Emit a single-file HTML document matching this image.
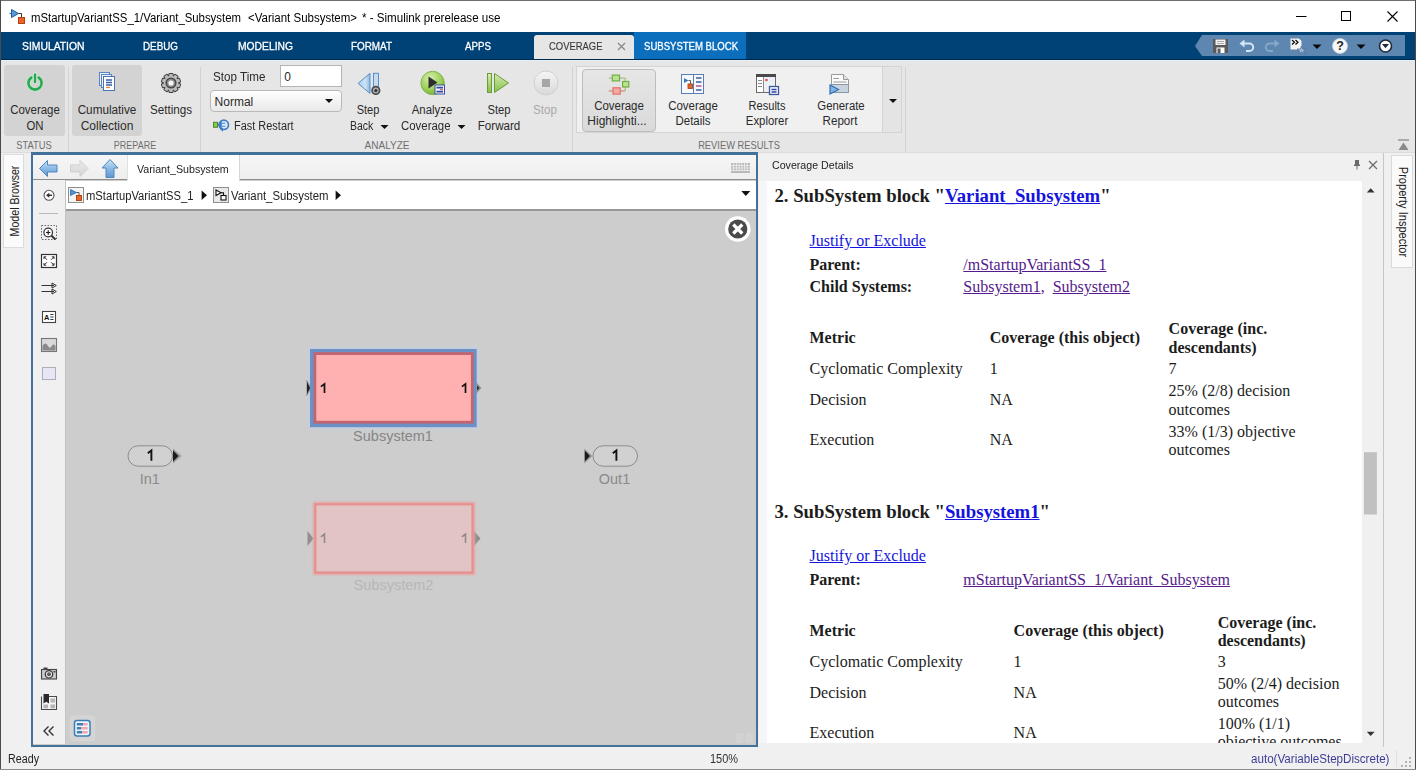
<!DOCTYPE html>
<html>
<head>
<meta charset="utf-8">
<title>Simulink</title>
<style>
*{box-sizing:border-box;margin:0;padding:0}
html,body{width:1416px;height:770px;overflow:hidden;background:#fff}
body{font-family:"Liberation Sans",sans-serif;font-size:12px;color:#222;position:relative}
.abs{position:absolute}
.t{position:absolute;white-space:nowrap;line-height:14px;transform-origin:0 50%;transform:scaleX(var(--k,1))}
.c{position:absolute;white-space:nowrap;line-height:14px;text-align:center;transform:translateX(-50%) scaleX(var(--k,1))}
#win{position:absolute;left:0;top:0;width:1416px;height:770px;background:#f0f0f0;overflow:hidden}
/* title */
#title{left:1px;top:1px;width:1414px;height:31px;background:#fff}
/* tabs */
#tabs{left:1px;top:32px;width:1414px;height:28px;background:#004275}
#tabs .tab{position:absolute;top:8px;color:#fff;font-size:11px;line-height:12px;white-space:nowrap;transform-origin:0 50%;transform:scaleX(var(--k,1));-webkit-text-stroke:.3px currentColor}
/* toolstrip */
#strip{left:1px;top:60px;width:1414px;height:93px;background:#e6e6e6;color:#2a2a2a}
.seclab{position:absolute;top:79px;font-size:11px;color:#6a6a6a;line-height:12px;transform:translateX(-50%);white-space:nowrap}
.vsep{position:absolute;top:7px;width:1px;height:85px;background:#d2d2d2}
.bl{position:absolute;white-space:nowrap;line-height:16px;font-size:12px;text-align:center;transform:translateX(-50%);color:#1e1e1e}
/* serif content */
#cov{font-family:"Liberation Serif",serif;font-size:16px;color:#1c1c1c}
#cov .s{position:absolute;white-space:nowrap;line-height:18px}
#cov .h{position:absolute;white-space:nowrap;font-weight:bold;font-size:18.72px;line-height:22px}
#cov a{text-decoration:underline}
#cov a.b{color:#1414dc}
#cov a.v{color:#551a8b}
#cov b{font-weight:bold}
</style>
</head>
<body>
<div id="win">

<!-- TITLE BAR -->
<div id="title" class="abs">
 <svg class="abs" style="left:7px;top:6px" width="20" height="20" viewBox="0 0 20 20">
  <path d="M1.5 6.5H4" stroke="#2b6aa8" stroke-width="1" fill="none"/>
  <path d="M3.5 2.5L10.5 6.5L3.5 10.5Z" fill="#5b9bd5" stroke="#1f5c99" stroke-width="1"/>
  <path d="M10.5 6.5H13.5V10" stroke="#333" stroke-width="1" fill="none"/>
  <rect x="10.5" y="10.5" width="6" height="6" fill="#e8632a" stroke="#b8410f" stroke-width="1"/>
 </svg>
 <div class="t" style="left:29.500px;top:9.500px;font-size:12px;color:#000;--k:.947">mStartupVariantSS_1/Variant_Subsystem</div>
 <div class="t" style="left:246.900px;top:9.500px;font-size:12px;color:#000;--k:.958">&lt;Variant Subsystem&gt;</div>
 <div class="t" style="left:360.700px;top:9.500px;font-size:12px;color:#000;--k:.966">* - Simulink prerelease use</div>
 <svg class="abs" style="left:1290px;top:4px" width="115" height="22" viewBox="0 0 115 22">
  <path d="M5 11.5H15.5" stroke="#000" stroke-width="1"/>
  <rect x="50.5" y="6.5" width="9" height="9" fill="none" stroke="#000" stroke-width="1"/>
  <path d="M96.5 6.5L106.5 16.5M106.5 6.5L96.5 16.5" stroke="#000" stroke-width="1.1"/>
 </svg>
</div>

<!-- TAB BAR -->
<div id="tabs" class="abs">
 <div class="tab" style="left:21px;--k:.941">SIMULATION</div>
 <div class="tab" style="left:142px;--k:.895">DEBUG</div>
 <div class="tab" style="left:237px;--k:.937">MODELING</div>
 <div class="tab" style="left:350px;--k:.899">FORMAT</div>
 <div class="tab" style="left:464px;--k:.886">APPS</div>
 <div class="abs" style="left:533px;top:3px;width:100px;height:25px;background:#e6e6e6;border-radius:3px 3px 0 0"></div>
 <div class="tab" style="left:548px;color:#3a3a3a;--k:.858;-webkit-text-stroke:.15px currentColor">COVERAGE</div>
 <svg class="abs" style="left:616px;top:10px" width="9" height="9" viewBox="0 0 9 9"><path d="M1 1L8 8M8 1L1 8" stroke="#8a8a8a" stroke-width="1.3"/></svg>
 <div class="abs" style="left:633px;top:0;width:112px;height:28px;background:#0c6fbd"></div>
 <div class="tab" style="left:643px;--k:.869">SUBSYSTEM BLOCK</div>
 <!-- quick access -->
 <svg class="abs" style="left:1190px;top:2px" width="220" height="24" viewBox="0 0 220 24">
  <path d="M4 12L11 1H214V22H11Z" fill="#5d86b0"/>
  <!-- save -->
  <rect x="22" y="5" width="15" height="14" fill="#5a5a5a"/>
  <rect x="24.5" y="5.5" width="10" height="5.5" fill="#f2f2f2"/>
  <path d="M26 7.5H33M26 9.5H33" stroke="#9a9a9a" stroke-width=".8"/>
  <rect x="25.5" y="13.5" width="8" height="5.5" fill="#fff"/>
  <rect x="26.5" y="14.5" width="3" height="4.5" fill="#5a5a5a"/>
  <!-- undo -->
  <path d="M52 9.5H58.5A3.7 3.7 0 0 1 58.5 17H55" fill="none" stroke="#d5e6f7" stroke-width="2"/>
  <path d="M48.5 9.5L53.5 5.5V13.5Z" fill="#d5e6f7"/>
  <!-- redo -->
  <path d="M85 9.5H78.5A3.7 3.7 0 0 0 78.5 17H82" fill="none" stroke="#86a6c8" stroke-width="2"/>
  <path d="M88.5 9.5L83.5 5.5V13.5Z" fill="#86a6c8"/>
  <!-- script -->
  <path d="M99.5 4.5H108L110.5 7V15.5H99.5Z" fill="#f4f4f4"/>
  <path d="M101 6L103.5 8.3L101 10.6M104.5 6L107 8.3L104.5 10.6" fill="none" stroke="#111" stroke-width="1.3"/>
  <path d="M110.5 12L111.8 15H115L112.5 17L113.5 20L110.5 18.2L107.5 20L108.5 17L106 15H109.2Z" fill="#9ab6d6" stroke="#4a6d95" stroke-width=".7"/>
  <path d="M121.5 10.5H130.5L126 15Z" fill="#0a0a0a"/>
  <!-- help -->
  <circle cx="149" cy="12" r="7.5" fill="#f6f6f6" stroke="#c8d4e2" stroke-width=".8"/>
  <text x="149" y="16.4" font-family="Liberation Sans" font-weight="bold" font-size="12.5" text-anchor="middle" fill="#222">?</text>
  <path d="M165.500 10.5H174.500L170 15Z" fill="#0a0a0a"/>
  <!-- circle arrow -->
  <circle cx="194.500" cy="12" r="6" fill="#fff" stroke="#1c2a3a" stroke-width="1.6"/>
  <path d="M191 10H198L194.500 14.200Z" fill="#1c2a3a"/>
 </svg>
</div>

<!-- TOOLSTRIP -->
<div id="strip" class="abs">
 <div class="abs" style="left:0;top:-1px;width:1414px;height:1px;background:#00294a"></div><div class="abs" style="left:0;top:0;width:1414px;height:1.3px;background:#e4f1fb"></div>
 <!-- toggled buttons -->
 <div class="abs" style="left:3px;top:5px;width:61px;height:71px;background:#d3d3d3;border-radius:3px"></div>
 <div class="abs" style="left:71px;top:5px;width:70px;height:71px;background:#d3d3d3;border-radius:3px"></div>
 <!-- separators -->
 <div class="vsep" style="left:67px"></div>
 <div class="vsep" style="left:199px"></div>
 <div class="vsep" style="left:571px"></div>
 <div class="vsep" style="left:904px"></div>
 <!-- power icon -->
 <svg class="abs" style="left:22px;top:10.700px" width="24" height="24" viewBox="0 0 24 24">
  <path d="M8.3 6.6A6.6 6.6 0 1 0 15.700 6.600" fill="none" stroke="#b9ecc6" stroke-width="4.2" stroke-linecap="round"/>
  <path d="M12 3.300V11" stroke="#d8f3df" stroke-width="4" stroke-linecap="round"/>
  <path d="M8.3 6.600A6.600 6.600 0 1 0 15.700 6.600" fill="none" stroke="#2da552" stroke-width="2.600" stroke-linecap="round"/>
  <path d="M12 3.500V11" stroke="#2da552" stroke-width="2.500" stroke-linecap="round"/>
 </svg>
 <!-- cumulative icon -->
 <svg class="abs" style="left:96px;top:11px" width="22" height="22" viewBox="0 0 22 22">
  <rect x="2.500" y="1.500" width="10" height="13" fill="#eef3fa" stroke="#5b84c4"/>
  <rect x="4.500" y="3.500" width="10" height="13" fill="#eef3fa" stroke="#5b84c4"/>
  <rect x="6.500" y="5.500" width="11" height="14" fill="#fff" stroke="#4a74b8"/>
  <path d="M9 9H15M9 11.500H15M9 14H15" stroke="#3a5fa5" stroke-width="1.400"/>
  <path d="M9 16.500H13" stroke="#d98a3a" stroke-width="1.300"/>
 </svg>
 <!-- gear -->
 <svg class="abs" style="left:158px;top:11px" width="24" height="24" viewBox="-12 -12 24 24">
  <g transform="scale(.94)"><g fill="#3e3e3e" stroke="#3e3e3e" stroke-width="2" stroke-linejoin="round">
   <path d="M-1.600 -9.700H1.600L2.100 -6.500H-2.100Z" transform="rotate(0.0)"/>
   <path d="M-1.600 -9.700H1.600L2.100 -6.500H-2.100Z" transform="rotate(36.0)"/>
   <path d="M-1.600 -9.700H1.600L2.100 -6.500H-2.100Z" transform="rotate(72.0)"/>
   <path d="M-1.600 -9.700H1.600L2.100 -6.500H-2.100Z" transform="rotate(108.0)"/>
   <path d="M-1.600 -9.700H1.600L2.100 -6.500H-2.100Z" transform="rotate(144.0)"/>
   <path d="M-1.600 -9.700H1.600L2.100 -6.500H-2.100Z" transform="rotate(180.0)"/>
   <path d="M-1.600 -9.700H1.600L2.100 -6.500H-2.100Z" transform="rotate(216.0)"/>
   <path d="M-1.600 -9.700H1.600L2.100 -6.500H-2.100Z" transform="rotate(252.0)"/>
   <path d="M-1.600 -9.700H1.600L2.100 -6.500H-2.100Z" transform="rotate(288.0)"/>
   <path d="M-1.600 -9.700H1.600L2.100 -6.500H-2.100Z" transform="rotate(324.0)"/>
   <circle r="7.500"/>
  </g>
  <g fill="#bcbcbc">
   <path d="M-1.600 -9.700H1.600L2.100 -6.500H-2.100Z" transform="rotate(0.0)"/>
   <path d="M-1.600 -9.700H1.600L2.100 -6.500H-2.100Z" transform="rotate(36.0)"/>
   <path d="M-1.600 -9.700H1.600L2.100 -6.500H-2.100Z" transform="rotate(72.0)"/>
   <path d="M-1.600 -9.700H1.600L2.100 -6.500H-2.100Z" transform="rotate(108.0)"/>
   <path d="M-1.600 -9.700H1.600L2.100 -6.500H-2.100Z" transform="rotate(144.0)"/>
   <path d="M-1.600 -9.700H1.600L2.100 -6.500H-2.100Z" transform="rotate(180.0)"/>
   <path d="M-1.600 -9.700H1.600L2.100 -6.500H-2.100Z" transform="rotate(216.0)"/>
   <path d="M-1.600 -9.700H1.600L2.100 -6.500H-2.100Z" transform="rotate(252.0)"/>
   <path d="M-1.600 -9.700H1.600L2.100 -6.500H-2.100Z" transform="rotate(288.0)"/>
   <path d="M-1.600 -9.700H1.600L2.100 -6.500H-2.100Z" transform="rotate(324.0)"/>
   <circle r="7.500"/>
  </g>
  <circle r="5.900" fill="#474747"/>
  <circle r="4.300" fill="#8e8e8e"/>
  <circle r="2.700" fill="#f6f6f6"/></g>
 </svg>
 <!-- stop time input -->
 <div class="abs" style="left:279px;top:5px;width:62px;height:22px;background:#fff;border:1px solid #b4b4b4"></div>
 <!-- dropdown -->
 <div class="abs" style="left:209px;top:30px;width:132px;height:22px;background:linear-gradient(#ffffff,#f1f1f1 60%,#e9e9e9);border:1px solid #b9b9b9;border-radius:4px"></div>
 <svg class="abs" style="left:323px;top:38px" width="10" height="6" viewBox="0 0 10 6"><path d="M1 1H9L5 5Z" fill="#111"/></svg>
 <!-- fast restart icon -->
 <svg class="abs" style="left:211px;top:57px" width="20" height="16" viewBox="0 0 20 16">
  <rect x="1.500" y="5.300" width="4" height="5" fill="#8fc653" stroke="#4f8a2b"/>
  <circle cx="11.800" cy="7.800" r="4.700" fill="#dfeaf8" stroke="#3f7fc4" stroke-width="1.700"/>
  <path d="M5.300 7.800L9.800 4V11.600Z" fill="#3f7fc4"/>
  <path d="M10 6.300H13.300M10 9.300H13.300" stroke="#4a86c8" stroke-width="1.100"/>
  <path d="M8 12.300L11 14.800V10.800Z" fill="#3f7fc4"/>
 </svg>
 <!-- step back -->
 <svg class="abs" style="left:355px;top:11px" width="28" height="26" viewBox="0 0 28 26">
  <defs><linearGradient id="gb" x1="0" y1="0" x2="1" y2="0"><stop offset="0" stop-color="#a9cdec"/><stop offset=".6" stop-color="#cfe3f5"/><stop offset="1" stop-color="#8bb8e0"/></linearGradient></defs>
  <path d="M2 12.400L14 2.300V22.400Z" fill="url(#gb)" stroke="#5a90c6" stroke-width="1" stroke-linejoin="round"/>
  <rect x="17.500" y="2.300" width="5" height="16" fill="#c4dcf2" stroke="#5a90c6"/>
  <circle cx="19.800" cy="19.400" r="4.600" fill="#4c4c4c"/>
  <circle cx="19.800" cy="19.400" r="2.900" fill="#b0b0b0"/>
  <circle cx="19.800" cy="19.400" r="1.500" fill="#2a2a2a"/>
 </svg>
 <svg class="abs" style="left:379px;top:64px" width="9" height="6" viewBox="0 0 9 6"><path d="M.5 1H8.500L4.500 5Z" fill="#111"/></svg>
 <!-- analyze coverage -->
 <svg class="abs" style="left:417.300px;top:9px" width="30" height="28" viewBox="0 0 30 28">
  <defs><radialGradient id="gg" cx=".4" cy=".3" r=".8"><stop offset="0" stop-color="#d7efb0"/><stop offset=".6" stop-color="#9bcf55"/><stop offset="1" stop-color="#6aa42c"/></radialGradient></defs>
  <circle cx="14.600" cy="14" r="11.700" fill="url(#gg)" stroke="#86b553" stroke-width="1"/>
  <path d="M10.500 7.500L19.500 13.500L10.500 19.500Z" fill="#2e2e2e"/>
  <rect x="17" y="16" width="9.500" height="9" fill="#f4f6fb" stroke="#3c4f9a"/>
  <path d="M18.500 18.600H25M18.500 22.600H25" stroke="#2f49a8" stroke-width="1.800"/>
  <path d="M22 20.600H25" stroke="#d9534f" stroke-width="1"/>
 </svg>
 <svg class="abs" style="left:456px;top:64px" width="9" height="6" viewBox="0 0 9 6"><path d="M.5 1H8.500L4.500 5Z" fill="#111"/></svg>
 <!-- step forward -->
 <svg class="abs" style="left:484px;top:11px" width="28" height="26" viewBox="0 0 28 26">
  <defs><linearGradient id="gf" x1="0" y1="0" x2="0" y2="1"><stop offset="0" stop-color="#d4edb0"/><stop offset="1" stop-color="#86bf48"/></linearGradient></defs>
  <rect x="2.500" y="2.500" width="4" height="19" fill="url(#gf)" stroke="#6a9c3a"/>
  <path d="M9.500 2.500L23.500 12L9.500 21.500Z" fill="url(#gf)" stroke="#6a9c3a"/>
 </svg>
 <!-- stop -->
 <svg class="abs" style="left:531px;top:9px" width="28" height="28" viewBox="0 0 28 28">
  <defs><linearGradient id="gs" x1="0" y1="0" x2="0" y2="1"><stop offset="0" stop-color="#f6f6f6"/><stop offset="1" stop-color="#d8d8d8"/></linearGradient></defs>
  <circle cx="14" cy="14" r="12" fill="url(#gs)" stroke="#d0d0d0"/>
  <rect x="10" y="10" width="8" height="8" fill="#a6a6a6"/>
 </svg>
 <!-- gallery -->
 <div class="abs" style="left:575px;top:5.800px;width:326px;height:67.700px;background:#f0f0f0;border:1px solid #d4d4d4"></div>
 <div class="abs" style="left:881px;top:6.800px;width:19px;height:65.700px;background:#e4e4e4;border-left:1px solid #d4d4d4"></div>
 <svg class="abs" style="left:886.500px;top:38px" width="10" height="6" viewBox="0 0 10 6"><path d="M1 1H9L5 5Z" fill="#111"/></svg>
 <div class="abs" style="left:581px;top:8.500px;width:74px;height:63px;background:linear-gradient(#e6e6e6,#dadada);border:1px solid #bdbdbd;border-radius:4px"></div>
 <!-- highlight icon -->
 <svg class="abs" style="left:604px;top:13px" width="28" height="24" viewBox="0 0 28 24">
  <path d="M3.800 5.100H7.500M14.500 5.100H20.200V8.500M20.200 14V18H15M3.800 18H8" fill="none" stroke="#86b866" stroke-width=".9"/>
  <path d="M3.800 18H8M15 18H19.500" stroke="#e59088" stroke-width=".9"/>
  <rect x="7.300" y="2.100" width="7.200" height="5.800" fill="#b9e392" stroke="#72ad42" stroke-width="1.200"/>
  <rect x="17.600" y="8.500" width="6.200" height="5.500" fill="#b9e392" stroke="#72ad42" stroke-width="1.200"/>
  <rect x="8" y="14.800" width="7.200" height="6.300" fill="#f5aaa4" stroke="#e2716a" stroke-width="1.200"/>
 </svg>
 <!-- coverage details icon -->
 <svg class="abs" style="left:679px;top:12px" width="26" height="24" viewBox="0 0 26 24">
  <rect x="1.500" y="2.500" width="22" height="19" fill="#f6f8fc" stroke="#5a7eb5"/>
  <path d="M13.500 2.500V21.500" stroke="#5a7eb5" stroke-width="1"/>
  <path d="M4 6L8.500 8.500L4 11Z" fill="#3a78c2"/>
  <path d="M8.500 8.500H10.500V12" stroke="#333" stroke-width=".8" fill="none"/>
  <rect x="8" y="12" width="4.500" height="4.500" fill="#e8632a" stroke="#9c3a0f" stroke-width=".8"/>
  <path d="M16 6H21.500M16 10H21.500M16 18H21.500" stroke="#3a5fa5" stroke-width="1.600"/>
  <path d="M16 14H21.500" stroke="#c55a8a" stroke-width="1.600"/>
 </svg>
 <!-- results explorer icon -->
 <svg class="abs" style="left:753px;top:12px" width="28" height="26" viewBox="0 0 28 26">
  <rect x="2.500" y="2.500" width="19" height="18" fill="#eaf0f5" stroke="#6a6a6a"/>
  <rect x="2" y="2" width="20" height="3" fill="#4a4a4a"/>
  <rect x="3" y="5" width="6" height="15" fill="#fff"/>
  <path d="M9.500 5V20.500" stroke="#8a8a8a" stroke-width="1"/>
  <path d="M4 8.500H8M4 11.500H8M4 14.500H8" stroke="#8a8a8a" stroke-width="1"/>
  <circle cx="12.500" cy="8" r="1.300" fill="#e0504a"/>
  <rect x="15.500" y="14.500" width="9" height="8" fill="#f4f6fb" stroke="#3c5a9a" stroke-width="1.300"/>
  <path d="M17.500 17.500H22.500M17.500 20H22.500" stroke="#2f49a8" stroke-width="1.300"/>
 </svg>
 <!-- generate report icon -->
 <svg class="abs" style="left:826px;top:12px" width="26" height="26" viewBox="0 0 26 26">
  <path d="M4.500 2.500H16.500L21.500 7.500V20.500H4.500Z" fill="#fafafa" stroke="#9a9a9a"/>
  <path d="M16.500 2.500V7.500H21.500" fill="#e4e4e4" stroke="#9a9a9a"/>
  <path d="M6.500 6.500H12M6.500 10H19.500" stroke="#9a9a9a" stroke-width="1"/>
  <rect x="4.500" y="12.500" width="17" height="8" fill="#c9d3de" stroke="#8a97a6"/>
  <path d="M3 13L11.500 17.500L3 22Z" fill="#7fb4e6" stroke="#2f6fb3" stroke-width="1.200"/>
 </svg>
 <!-- collapse -->
 <svg class="abs" style="left:1396px;top:79px" width="13" height="12" viewBox="0 0 13 12"><path d="M1 1H12" stroke="#8a8a8a" stroke-width="1.300"/><path d="M6.500 3.500L11.500 11H1.500Z" fill="#8a8a8a"/></svg>
 <div class="c" style="left:33.5px;top:42.5px;font-size:12px;--k:0.955;">Coverage</div>
<div class="c" style="left:33.5px;top:59.3px;font-size:12px;--k:0.944;">ON</div>
<div class="c" style="left:105.8px;top:42.5px;font-size:12px;--k:0.978;">Cumulative</div>
<div class="c" style="left:106px;top:59.3px;font-size:12px;">Collection</div>
<div class="c" style="left:169.5px;top:42.5px;font-size:12px;--k:0.971;">Settings</div>
<div class="t" style="left:211.6px;top:10px;font-size:12px;--k:0.970;">Stop Time</div>
<div class="t" style="left:283.3px;top:10px;font-size:12px;">0</div>
<div class="t" style="left:213.6px;top:35px;font-size:12px;">Normal</div>
<div class="t" style="left:233.3px;top:59.3px;font-size:12px;--k:0.913;">Fast Restart</div>
<div class="c" style="left:367.3px;top:42.5px;font-size:12px;--k:0.919;">Step</div>
<div class="t" style="left:348.5px;top:59.3px;font-size:12px;--k:0.873;">Back</div>
<div class="c" style="left:430.7px;top:42.5px;font-size:12px;--k:0.948;">Analyze</div>
<div class="t" style="left:400px;top:59.3px;font-size:12px;--k:0.951;">Coverage</div>
<div class="c" style="left:497.5px;top:42.5px;font-size:12px;--k:0.932;">Step</div>
<div class="c" style="left:497.7px;top:59.3px;font-size:12px;--k:0.966;">Forward</div>
<div class="c" style="left:544px;top:42.5px;font-size:12px;--k:0.964;color:#a9a9a9;">Stop</div>
<div class="c" style="left:617.5px;top:38.8px;font-size:12px;--k:0.955;">Coverage</div>
<div class="c" style="left:616px;top:54px;font-size:12px;">Highlighti...</div>
<div class="c" style="left:691.5px;top:38.8px;font-size:12px;--k:0.955;">Coverage</div>
<div class="c" style="left:691.5px;top:54px;font-size:12px;--k:0.954;">Details</div>
<div class="c" style="left:765.5px;top:38.8px;font-size:12px;--k:0.922;">Results</div>
<div class="c" style="left:765.8px;top:54px;font-size:12px;--k:0.949;">Explorer</div>
<div class="c" style="left:839.5px;top:38.8px;font-size:12px;--k:0.947;">Generate</div>
<div class="c" style="left:839.4px;top:54px;font-size:12px;--k:0.966;">Report</div>
<div class="c" style="left:33.4px;top:78.2px;font-size:11px;--k:0.852;color:#6e6e6e;">STATUS</div>
<div class="c" style="left:133.5px;top:78.2px;font-size:11px;--k:0.817;color:#6e6e6e;">PREPARE</div>
<div class="c" style="left:385.5px;top:78.2px;font-size:11px;--k:0.913;color:#6e6e6e;">ANALYZE</div>
<div class="c" style="left:738px;top:78.2px;font-size:11px;--k:0.848;color:#6e6e6e;">REVIEW RESULTS</div>

</div>


<!-- DOC AREA -->
<div id="doc" class="abs" style="left:0;top:153px;width:1416px;height:594px;background:#f0f0f0">
 <!-- strip bottom line -->
 <div class="abs" style="left:0;top:-1px;width:1416px;height:1px;background:#dcdcdc"></div>
 <!-- Model Browser tab -->
 <div class="abs" style="left:2.5px;top:1px;width:21.5px;height:94px;background:#fbfbfb;border:1px solid #dcdcdc"></div>
 <div class="abs" style="left:14.5px;top:48px;width:0;height:0"><div class="c" style="left:0;top:-7px;font-size:12px;color:#222;transform:translateX(-50%) rotate(-90deg) scaleX(.885)">Model Browser</div></div>
 <!-- frame -->
 <div class="abs" style="left:31px;top:-0.7px;width:727.4px;height:594.5px;background:#44719a"></div>
 <div class="abs" style="left:33px;top:2px;width:722.5px;height:589.8px;background:#cdcdcd"></div>
 <!-- top bar -->
 <div class="abs" style="left:33px;top:2px;width:722.5px;height:25px;background:linear-gradient(#f6f6f6,#eeeeee)"></div>
 <div class="abs" style="left:33px;top:26px;width:722.5px;height:1.3px;background:#8e8e8e"></div>
 <div class="abs" style="left:127px;top:2px;width:113px;height:25.5px;background:#fff;border-left:1px solid #e0e0e0;border-right:1px solid #d6d6d6"></div>
 <div class="t" style="left:137px;top:8.5px;font-size:11px;color:#222;--k:.97">Variant_Subsystem</div>
 <!-- nav arrows -->
 <svg class="abs" style="left:37px;top:5px" width="86" height="22" viewBox="0 0 86 22">
  <defs>
   <linearGradient id="nb" x1="0" y1="0" x2="0" y2="1"><stop offset="0" stop-color="#cfe4f7"/><stop offset=".5" stop-color="#8cbbe6"/><stop offset="1" stop-color="#5d97d0"/></linearGradient>
   <linearGradient id="ng" x1="0" y1="0" x2="0" y2="1"><stop offset="0" stop-color="#ececec"/><stop offset="1" stop-color="#d4d4d4"/></linearGradient>
  </defs>
  <path d="M2.500 10.500L10.500 2.500V7H20V14H10.500V18.500Z" fill="url(#nb)" stroke="#4f86be" stroke-width="1" stroke-linejoin="round"/>
  <path d="M51 10.500L43 2.500V7H33.500V14H43V18.500Z" fill="url(#ng)" stroke="#cfcfcf" stroke-width="1" stroke-linejoin="round"/>
  <path d="M73 1.500L81 10H77V19.500H69V10H65Z" fill="url(#nb)" stroke="#4f86be" stroke-width="1" stroke-linejoin="round"/>
 </svg>
 <!-- keyboard icon -->
 <svg class="abs" style="left:731px;top:10px" width="20" height="11" viewBox="0 0 20 11">
  <rect x="0" y="0" width="19" height="10" fill="#b9b9b9"/>
  <path d="M0 2.500H19M0 5H19M0 7.500H19" stroke="#ececec" stroke-width=".9"/>
  <path d="M2.700 0V7.500M5.400 0V7.500M8.100 0V7.500M10.800 0V7.500M13.500 0V7.500M16.200 0V7.500" stroke="#ececec" stroke-width=".9"/>
 </svg>
 <!-- palette -->
 <div class="abs" style="left:33px;top:27.3px;width:33px;height:563.7px;background:#f0f0f0;border-right:1px solid #c4c4c4"></div>
 <!-- breadcrumb -->
 <div class="abs" style="left:66px;top:28px;width:689.5px;height:28px;background:#fff"></div>
 <div class="abs" style="left:66px;top:56px;width:689.5px;height:1.5px;background:#979797"></div>
 <svg class="abs" style="left:67px;top:33px" width="18" height="18" viewBox="0 0 18 18">
  <rect x="1.500" y="1.500" width="15" height="15" fill="#f4f4f4" stroke="#8f8f8f"/>
  <path d="M3.500 3.500L9.500 6.500L3.500 9.500Z" fill="#4f95d6" stroke="#2868a8" stroke-width=".8"/>
  <path d="M9.500 6.500H12V9.500" stroke="#444" stroke-width=".9" fill="none"/>
  <rect x="9.500" y="9.500" width="5" height="5" fill="#e8632a" stroke="#a33e10" stroke-width=".9"/>
 </svg>
 <div class="t" style="left:86px;top:35.500px;font-size:12px;color:#222;--k:.933">mStartupVariantSS_1</div>
 <svg class="abs" style="left:201px;top:36.500px" width="7" height="11" viewBox="0 0 7 11"><path d="M.6 .5L6 5.200L.6 10Z" fill="#111"/></svg>
 <svg class="abs" style="left:212px;top:33px" width="18" height="18" viewBox="0 0 18 18">
  <rect x="1.500" y="1.500" width="15" height="15" fill="#e9e9e9" stroke="#8f8f8f"/>
  <path d="M4 4L9 6.800L4 9.600Z" fill="#fff" stroke="#111" stroke-width="1.100"/>
  <path d="M9 6.800H11.500V9.500" stroke="#111" stroke-width="1.100" fill="none"/>
  <rect x="9" y="9.500" width="5" height="4.500" fill="#fff" stroke="#111" stroke-width="1.100"/>
 </svg>
 <div class="t" style="left:231px;top:35.500px;font-size:12px;color:#222;--k:.945">Variant_Subsystem</div>
 <svg class="abs" style="left:335px;top:36.500px" width="7" height="11" viewBox="0 0 7 11"><path d="M.6 .5L6 5.200L.6 10Z" fill="#111"/></svg>
 <svg class="abs" style="left:740px;top:37px" width="12" height="7" viewBox="0 0 12 7"><path d="M1.300 1H10.300L5.800 6Z" fill="#111"/></svg>
 <!-- palette icons -->
 <svg class="abs" style="left:41px;top:34px" width="17" height="17" viewBox="0 0 17 17">
  <circle cx="8" cy="8.300" r="5" fill="#fff" stroke="#555" stroke-width="1.100"/>
  <path d="M5 8.300L8.300 5.800V7.500H11V9.100H8.300V10.800Z" fill="#333"/>
 </svg>
 <div class="abs" style="left:39px;top:60px;width:19px;height:1px;background:#b8b8b8"></div>
 <svg class="abs" style="left:40px;top:71px" width="18" height="18" viewBox="0 0 18 18">
  <rect x="1.500" y="1.500" width="15" height="14" fill="none" stroke="#666" stroke-width="1" stroke-dasharray="1.500 1.500"/>
  <circle cx="8.200" cy="8.500" r="4.300" fill="#fff" stroke="#333" stroke-width="1.200"/>
  <path d="M6 8.500H10.400M8.200 6.300V10.700" stroke="#222" stroke-width="1.200"/>
  <path d="M11.500 11.800L15.500 15.500" stroke="#333" stroke-width="2"/>
 </svg>
 <svg class="abs" style="left:40px;top:100px" width="18" height="16" viewBox="0 0 18 16">
  <rect x="1.500" y="1.500" width="15" height="13" fill="#fff" stroke="#333" stroke-width="1.200"/>
  <path d="M4 6V3.800H6.200M4 3.800L7 6.800M14 6V3.800H11.800M14 3.800L11 6.800M4 10V12.200H6.200M4 12.200L7 9.200M14 10V12.200H11.800M14 12.200L11 9.200" stroke="#333" stroke-width="1" fill="none"/>
 </svg>
 <svg class="abs" style="left:40px;top:128px" width="18" height="16" viewBox="0 0 18 16">
  <path d="M1.500 4.500H14M1.500 10.500H14" stroke="#333" stroke-width="1.100"/>
  <path d="M12 2L16.300 4.500L12 7Z" fill="none" stroke="#333" stroke-width="1"/>
  <path d="M12 8L16.300 10.500L12 13Z" fill="none" stroke="#333" stroke-width="1"/>
 </svg>
 <svg class="abs" style="left:41px;top:157px" width="16" height="14" viewBox="0 0 16 14">
  <rect x="1.500" y="1.500" width="13" height="11" fill="#fff" stroke="#444" stroke-width="1.100"/>
  <text x="3" y="10" font-family="Liberation Sans" font-weight="bold" font-size="7.500" fill="#111">A</text>
  <path d="M9.300 4.500H12.500M9.300 7H12.500M9.300 9.500H12.500" stroke="#333" stroke-width="1"/>
 </svg>
 <svg class="abs" style="left:40px;top:184px" width="18" height="16" viewBox="0 0 18 16">
  <rect x="1.500" y="1.500" width="15" height="13" fill="#d9d9d9" stroke="#777" stroke-width="1.100"/>
  <path d="M2.500 13.500V9C4 5.500 6.500 5.500 8 9C9.500 11.500 11 11 12 8.500C13.500 6.500 15 7.500 15.500 9.500V13.500Z" fill="#8a8a8a"/>
 </svg>
 <div class="abs" style="left:42px;top:213.500px;width:14px;height:13.500px;background:#e6e6f6;border:1px solid #aeaeb8"></div>
 <!-- bottom palette icons -->
 <svg class="abs" style="left:40px;top:512px" width="18" height="16" viewBox="0 0 18 16">
  <rect x="1.500" y="4.500" width="15" height="9.500" fill="#c9c9c9" stroke="#444" stroke-width="1.100"/>
  <rect x="3.500" y="2.500" width="4" height="2" fill="#444"/>
  <circle cx="9" cy="9.300" r="3.700" fill="#e8e8e8" stroke="#333" stroke-width="1.200"/>
  <circle cx="9" cy="9.300" r="2" fill="#5a5a5a"/>
  <rect x="13.500" y="6" width="2" height="1.500" fill="#444"/>
 </svg>
 <svg class="abs" style="left:40px;top:540px" width="18" height="18" viewBox="0 0 18 18">
  <path d="M1.500 3.500V16.500H16.500V3.500H9" fill="#f4f4f4" stroke="#4a4a4a" stroke-width="1.100"/>
  <path d="M3.500 1H9V10.500L6.200 8.800L3.500 10.500Z" fill="#2a2a2a"/>
  <rect x="10.500" y="5.500" width="4.500" height="4" fill="#b4b4b4"/>
  <rect x="3.500" y="11.500" width="4.500" height="3.800" fill="#b4b4b4"/>
  <rect x="10.500" y="11.500" width="4.500" height="3.800" fill="#b4b4b4"/>
 </svg>
 <svg class="abs" style="left:42px;top:572px" width="14" height="12" viewBox="0 0 14 12">
  <path d="M6.500 1.500L2 6L6.500 10.500M11.500 1.500L7 6L11.500 10.500" fill="none" stroke="#333" stroke-width="1.400"/>
 </svg>
 <svg class="abs" style="left:66px;top:58px" width="689.5" height="533" viewBox="66 211 689.5 533" font-family="Liberation Sans">
  <defs>
   <filter id="bl1" x="-10%" y="-10%" width="120%" height="120%"><feGaussianBlur stdDeviation="0.6"/></filter>
   <filter id="bl2" x="-10%" y="-10%" width="120%" height="120%"><feGaussianBlur stdDeviation="1.1"/></filter>
  </defs>
  <!-- close button -->
  <circle cx="737.8" cy="229" r="12.800" fill="#fff"/>
  <circle cx="737.8" cy="229" r="9.600" fill="#4a4a4a"/>
  <path d="M733.300 224.500L742.300 233.500M742.300 224.500L733.300 233.500" stroke="#fff" stroke-width="3.200"/>
  <!-- Subsystem1 -->
  <rect x="308.300" y="347.300" width="170" height="81.500" fill="#c3cfe1" filter="url(#bl2)"/>
  <path d="M306.800 380.500L310.500 388L306.800 395.500" fill="#222" stroke="#8a8a8a" stroke-width="1"/>
  <path d="M476.500 382.500L481.500 388L476.500 393.500Z" fill="#8f8f8f"/>
  <path d="M477 385.500L479.500 388L477 390.500Z" fill="#333"/>
  <rect x="310" y="349" width="166.700" height="78.200" fill="#6a90c6" filter="url(#bl1)"/>
  <rect x="313.600" y="352.200" width="160" height="71.400" fill="#c4646f"/>
  <rect x="316.300" y="355" width="154.600" height="65.800" fill="#ffb1b1"/>
  <path d="M320.9 386.7L324.5 383.9V392.9" fill="none" stroke="#111" stroke-width="1.7" stroke-linejoin="miter"/>
  <path d="M461.9 386.7L465.5 383.9V392.9" fill="none" stroke="#111" stroke-width="1.7" stroke-linejoin="miter"/>
  <text x="393" y="440.800" font-size="14.500" fill="#858585" text-anchor="middle">Subsystem1</text>
  <!-- In1 -->
  <rect x="128" y="445.800" width="44.500" height="20.400" rx="10.200" fill="#d1d1d1" stroke="#8c8c8c" stroke-width="1"/>
  <path d="M147.8 453.3L151.4 450.5V460.7" fill="none" stroke="#111" stroke-width="1.9" stroke-linejoin="miter"/>
  <path d="M173 448.500L181.500 456L173 463.500Z" fill="#9a9a9a"/>
  <path d="M173 450.500L178.500 456L173 461.500Z" fill="#1a1a1a"/>
  <text x="149.800" y="483.600" font-size="14.500" fill="#8a8a8a" text-anchor="middle">In1</text>
  <!-- Out1 -->
  <path d="M584.300 448.500L592.500 456L584.300 463.500Z" fill="#9a9a9a"/>
  <path d="M584.800 450.500L590 456L584.800 461.500Z" fill="#1a1a1a"/>
  <rect x="593" y="445.800" width="44.500" height="20.400" rx="10.200" fill="#d1d1d1" stroke="#8c8c8c" stroke-width="1"/>
  <path d="M612.8 453.3L616.4 450.5V460.7" fill="none" stroke="#111" stroke-width="1.9" stroke-linejoin="miter"/>
  <text x="614.500" y="483.600" font-size="14.500" fill="#8a8a8a" text-anchor="middle">Out1</text>
  <!-- Subsystem2 -->
  <path d="M307.500 531L313.500 538.500L307.500 546Z" fill="#8f8f8f"/>
  <path d="M474 531L480.500 538.500L474 546Z" fill="#8f8f8f"/>
  <rect x="313" y="502" width="162" height="73" fill="#e9a3a3" filter="url(#bl2)"/>
  <rect x="314.200" y="503.200" width="159.400" height="70.400" fill="#e58f8f"/>
  <rect x="316.400" y="505.400" width="155" height="66" fill="#e2c4c4"/>
  <path d="M320.9 536.9L324.5 534.1V543.1" fill="none" stroke="#8f8686" stroke-width="1.5" stroke-linejoin="miter"/>
  <path d="M461.9 536.9L465.5 534.1V543.1" fill="none" stroke="#8f8686" stroke-width="1.5" stroke-linejoin="miter"/>
  <text x="393.500" y="589.500" font-size="14.500" fill="#b7b7b7" text-anchor="middle">Subsystem2</text>
  <!-- bottom-left button -->
  <rect x="70.500" y="716" width="24" height="24.500" rx="3" fill="#d4d4d4" stroke="#d9d9d9" stroke-width=".8"/>
  <rect x="74.500" y="720.500" width="15.500" height="15.500" rx="2.500" fill="#eef6fc" stroke="#3c7db6" stroke-width="1.500"/>
  <path d="M76.800 724.300H83M76.800 728.300H81M76.800 732.300H82" stroke="#3f7fb0" stroke-width="2.600"/>
  <path d="M83 724.300H87.700M81 728.300H87.700M82 732.300H87.700" stroke="#f0a8b4" stroke-width="2.600"/>
  <!-- faint bottom-right -->
  <rect x="735.500" y="733" width="8" height="10" fill="#d2d2d2"/>
  <rect x="745.500" y="733" width="8" height="10" fill="#d2d2d2"/>
 </svg>
 <!-- right pane -->
 <div class="abs" style="left:759px;top:0;width:625px;height:594px;background:#f0f0f0;border-right:1px solid #c6c6c6"></div>
 <div class="abs" style="left:759px;top:28px;width:8px;height:562px;background:#f4f6f9"></div>
 <div class="t" style="left:772.3px;top:5.4px;font-size:11px;color:#222;--k:.967">Coverage Details</div>
 <svg class="abs" style="left:1352px;top:6px" width="10" height="12" viewBox="0 0 10 12"><path d="M3 1H7V5.500H8V7H2V5.500H3Z" fill="#6a6a6a"/><path d="M5 7V10.500" stroke="#6a6a6a" stroke-width="1"/></svg>
 <svg class="abs" style="left:1368px;top:7px" width="10" height="10" viewBox="0 0 10 10"><path d="M1 1L9 9M9 1L1 9" stroke="#6a6a6a" stroke-width="1.200"/></svg>
 <div id="cov" class="abs" style="left:767px;top:28px;width:595.200px;height:562px;background:#fff;overflow:hidden">
  <div class="abs" style="left:0;top:-28px;width:596px;height:600px">
  <div class="h" style="left:7.5px;top:32.4px">2. SubSystem block "<a class="b">Variant_Subsystem</a>"</div>
  <div class="s" style="left:42.5px;top:79.1px;"><a class="b">Justify or Exclude</a></div>
  <div class="s" style="left:42.5px;top:103.2px;"><b>Parent:</b></div>
  <div class="s" style="left:196.3px;top:103.2px;"><a class="v">/mStartupVariantSS_1</a></div>
  <div class="s" style="left:42.5px;top:125.1px;"><b>Child Systems:</b></div>
  <div class="s" style="left:196.3px;top:125.1px;"><a class="v">Subsystem1</a><span style="color:#551a8b">,</span>&nbsp; <a class="v">Subsystem2</a></div>
  <div class="s" style="left:42.5px;top:176.2px;"><b>Metric</b></div>
  <div class="s" style="left:222.8px;top:176.2px;"><b>Coverage (this object)</b></div>
  <div class="s" style="left:401.6px;top:167.4px;"><b>Coverage (inc.</b></div>
  <div class="s" style="left:401.6px;top:185.5px;"><b>descendants)</b></div>
  <div class="s" style="left:42.5px;top:207.2px;">Cyclomatic Complexity</div>
  <div class="s" style="left:222.8px;top:207.2px;">1</div>
  <div class="s" style="left:401.6px;top:207.2px;">7</div>
  <div class="s" style="left:42.5px;top:238.2px;">Decision</div>
  <div class="s" style="left:222.8px;top:238.2px;">NA</div>
  <div class="s" style="left:401.6px;top:229.4px;">25% (2/8) decision</div>
  <div class="s" style="left:401.6px;top:247.5px;">outcomes</div>
  <div class="s" style="left:42.5px;top:278.4px;">Execution</div>
  <div class="s" style="left:222.8px;top:278.4px;">NA</div>
  <div class="s" style="left:401.6px;top:269.8px;">33% (1/3) objective</div>
  <div class="s" style="left:401.6px;top:287.8px;">outcomes</div>
  <div class="h" style="left:7.5px;top:348.0px">3. SubSystem block "<a class="b">Subsystem1</a>"</div>
  <div class="s" style="left:42.5px;top:394.2px;"><a class="b">Justify or Exclude</a></div>
  <div class="s" style="left:42.5px;top:417.9px;"><b>Parent:</b></div>
  <div class="s" style="left:196.3px;top:417.9px;"><a class="v">mStartupVariantSS_1/Variant_Subsystem</a></div>
  <div class="s" style="left:42.5px;top:469.3px;"><b>Metric</b></div>
  <div class="s" style="left:246.6px;top:469.3px;"><b>Coverage (this object)</b></div>
  <div class="s" style="left:450.7px;top:460.6px;"><b>Coverage (inc.</b></div>
  <div class="s" style="left:450.7px;top:478.6px;"><b>descendants)</b></div>
  <div class="s" style="left:42.5px;top:500.3px;">Cyclomatic Complexity</div>
  <div class="s" style="left:246.6px;top:500.3px;">1</div>
  <div class="s" style="left:450.7px;top:500.3px;">3</div>
  <div class="s" style="left:42.5px;top:531.2px;">Decision</div>
  <div class="s" style="left:246.6px;top:531.2px;">NA</div>
  <div class="s" style="left:450.7px;top:522.1px;">50% (2/4) decision</div>
  <div class="s" style="left:450.7px;top:540.1px;">outcomes</div>
  <div class="s" style="left:42.5px;top:570.8px;">Execution</div>
  <div class="s" style="left:246.6px;top:570.8px;">NA</div>
  <div class="s" style="left:450.7px;top:561.7px;">100% (1/1)</div>
  <div class="s" style="left:450.7px;top:579.8px;">objective outcomes</div>
  </div>
 </div>
 <!-- scrollbar -->
 <svg class="abs" style="left:1363px;top:28px" width="20" height="562" viewBox="1363 181 20 562">
  <path d="M1366.800 192.500H1374.600L1370.700 188.300Z" fill="#333"/>
  <rect x="1364" y="452.200" width="12.900" height="62.300" fill="#c1c1c1"/>
  <path d="M1366.800 731.700H1374.600L1370.700 736Z" fill="#333"/>
 </svg>
 <!-- property inspector tab -->
 <div class="abs" style="left:1391px;top:2px;width:21.500px;height:113px;background:#fafafa;border:1px solid #dadada"></div>
 <div class="abs" style="left:1403px;top:58.500px;width:0;height:0"><div class="c" style="left:0;top:-7px;font-size:12px;color:#222;transform:translateX(-50%) rotate(90deg) scaleX(.922)">Property Inspector</div></div>
 <!-- /right pane -->
</div>


<!-- STATUS BAR -->
<div id="status" class="abs" style="left:1px;top:747px;width:1414px;height:22px;background:#f0f0f0">
 <div class="t" style="left:6.800px;top:5px;font-size:12px;color:#222;--k:.894">Ready</div>
 <div class="t" style="left:709px;top:5px;font-size:12px;color:#333;--k:.912">150%</div>
 <div class="t" style="left:1249.500px;top:4.500px;font-size:12px;color:#3c3c96;--k:.967">auto(VariableStepDiscrete)</div>
 <div class="abs" style="left:1395px;top:3px;width:1px;height:17px;background:#e0e0e0"></div>
 <svg class="abs" style="left:1399px;top:9px" width="13" height="12" viewBox="0 0 13 12" fill="#b4b4b4"><rect x="9" y="1" width="2" height="2"/><rect x="5" y="5" width="2" height="2"/><rect x="9" y="5" width="2" height="2"/><rect x="1" y="9" width="2" height="2"/><rect x="5" y="9" width="2" height="2"/><rect x="9" y="9" width="2" height="2"/></svg>
</div>

<!-- window border -->
<div class="abs" style="left:0;top:0;width:1416px;height:1px;background:#6e6e6e"></div>
<div class="abs" style="left:0;top:0;width:1px;height:770px;background:#4a4a4a"></div>
<div class="abs" style="left:1415px;top:0;width:1px;height:770px;background:#4a4a4a"></div>
<div class="abs" style="left:0;top:769px;width:1416px;height:1px;background:#8a8a8a"></div>
</div>
</body>
</html>
